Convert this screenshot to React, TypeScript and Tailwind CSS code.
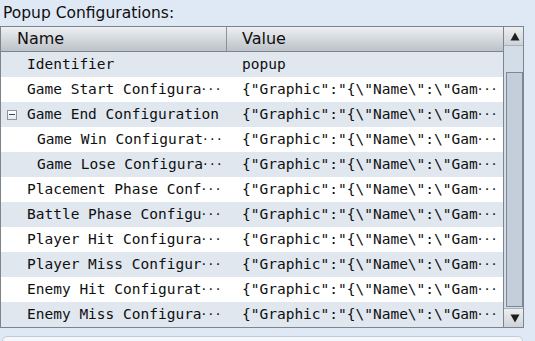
import React from 'react'

type Row = {
  name: string
  value: string
  cut: boolean
  level: number
  expander?: boolean
}

const graphic = '{"Graphic":"{\\"Name\\":\\"Gam'

const rows: Row[] = [
  { name: 'Identifier', value: 'popup', cut: false, level: 0 },
  { name: 'Game Start Configura', value: graphic, cut: true, level: 0 },
  { name: 'Game End Configuration', value: graphic, cut: false, level: 0, expander: true },
  { name: 'Game Win Configurat', value: graphic, cut: true, level: 1 },
  { name: 'Game Lose Configura', value: graphic, cut: true, level: 1 },
  { name: 'Placement Phase Conf', value: graphic, cut: true, level: 0 },
  { name: 'Battle Phase Configu', value: graphic, cut: true, level: 0 },
  { name: 'Player Hit Configura', value: graphic, cut: true, level: 0 },
  { name: 'Player Miss Configur', value: graphic, cut: true, level: 0 },
  { name: 'Enemy Hit Configurat', value: graphic, cut: true, level: 0 },
  { name: 'Enemy Miss Configura', value: graphic, cut: true, level: 0 }
]

// elided text: three narrow dots after the cut
const Cell = ({ text, cut }: { text: string; cut: boolean }) => (
  <span className="whitespace-pre">
    {text}
    {cut && <span className="font-['DejaVu_Sans',sans-serif] tracking-[2.4px]">···</span>}
  </span>
)

const App = () => {
  return (
    <div className="w-[535px] h-[341px] overflow-hidden bg-[#dfe9f6] text-[#0f0f0f]">
      <div className="h-[26px] pt-[3px] pl-[3px] text-[15.5px] leading-[20px] font-['DejaVu_Sans',sans-serif]">
        Popup Configurations:
      </div>

      <div className="w-[524px] h-[302px] flex border border-[#7c848d] bg-white">
        <div className="w-[503px] flex flex-col border-r border-[#7c848d]">
          {/* header */}
          <div className="h-[25px] flex border-b border-[#7c848d] bg-gradient-to-b from-[#eef0f2] to-[#bcc2c8] text-[16px] leading-[24px] font-['DejaVu_Sans',sans-serif]">
            <div className="w-[226px] pl-[16px] border-r border-[#8a9198]">Name</div>
            <div className="flex-1 pl-[15px]">Value</div>
          </div>

          {rows.map((row, i) => (
            <div
              key={row.name}
              className={
                'h-[25px] flex text-[14.5px] leading-[25px] font-["DejaVu_Sans_Mono",monospace] ' +
                (i % 2 === 0 ? 'bg-[#e0e7ef]' : 'bg-white')
              }
            >
              <div
                className={
                  'w-[226px] flex items-center ' + (row.level === 1 ? 'pl-[36px]' : 'pl-[26px]')
                }
              >
                {row.expander && (
                  <span className="ml-[-20px] mr-[10px] w-[10px] h-[10px] flex items-center justify-center border border-[#8b939c] bg-gradient-to-b from-white to-[#e4e9ef]">
                    <span className="w-[6px] h-[1px] bg-[#2e4866]" />
                  </span>
                )}
                <Cell text={row.name} cut={row.cut} />
              </div>
              <div className="flex-1 pl-[15px] flex items-center">
                <Cell text={row.value} cut={row.cut || row.expander === true} />
              </div>
            </div>
          ))}
        </div>

        {/* scrollbar */}
        <div className="w-[19px] flex flex-col bg-[#d3dde8]">
          <div className="h-[19px] flex items-center justify-center border-b border-[#a9b1ba] bg-gradient-to-b from-[#eceef0] to-[#cfd3d8]">
            <svg width="10" height="9" viewBox="0 0 10 9" className="ml-[2px]">
              <path d="M5 0.5 L9.5 8.5 L0.5 8.5 Z" fill="#1e1e1e" />
            </svg>
          </div>
          <div className="flex-1 flex flex-col pt-[26px] pb-[1px] pl-[2px]">
            <div className="flex-1 border border-[#7e8893] bg-[#c3ceda]" />
          </div>
          <div className="h-[19px] flex items-center justify-center border-t border-[#a9b1ba] bg-gradient-to-b from-[#eceef0] to-[#cfd3d8]">
            <svg width="10" height="9" viewBox="0 0 10 9" className="ml-[2px]">
              <path d="M0.5 0.5 L9.5 0.5 L5 8.5 Z" fill="#1e1e1e" />
            </svg>
          </div>
        </div>
      </div>

      <div className="mt-[8px] ml-[2px] w-[521px] h-[20px] rounded-t-[5px] border border-[#c3ccd6] bg-[#f3f6fa]" />
    </div>
  )
}

export default App
